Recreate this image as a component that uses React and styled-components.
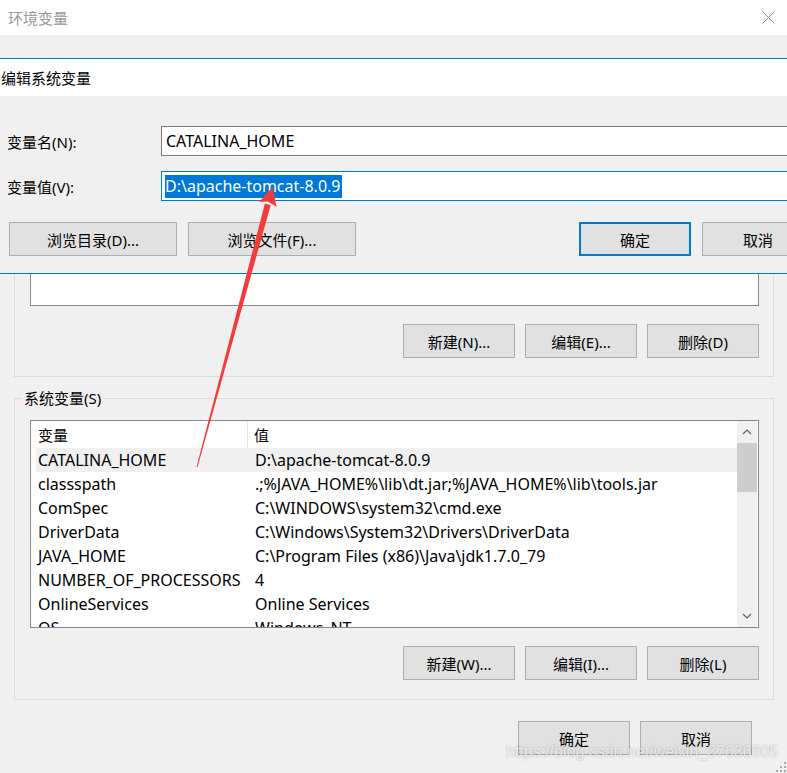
import React from 'react';
import styled, { createGlobalStyle } from 'styled-components';

const GlobalStyle = createGlobalStyle`
  html, body {
    margin: 0;
    padding: 0;
    overflow: hidden;
    background: #f0f0f0;
  }
  body {
    font-family: "Noto Sans", "Noto Sans CJK SC", sans-serif;
    font-size: 15px;
    color: #000;
  }
  * {
    box-sizing: border-box;
  }
`;

const systemVars = [
  ['CATALINA_HOME', 'D:\\apache-tomcat-8.0.9'],
  ['classspath', '.;%JAVA_HOME%\\lib\\dt.jar;%JAVA_HOME%\\lib\\tools.jar'],
  ['ComSpec', 'C:\\WINDOWS\\system32\\cmd.exe'],
  ['DriverData', 'C:\\Windows\\System32\\Drivers\\DriverData'],
  ['JAVA_HOME', 'C:\\Program Files (x86)\\Java\\jdk1.7.0_79'],
  ['NUMBER_OF_PROCESSORS', '4'],
  ['OnlineServices', 'Online Services'],
  ['OS', 'Windows_NT'],
];

const Window = styled.div`
  position: relative;
  width: 787px;
  height: 773px;
  overflow: hidden;
  background: #f0f0f0;
`;

const TitleBar = styled.div`
  height: 35px;
  background: #fff;
  display: flex;
  align-items: center;
  justify-content: space-between;
  padding: 0 12px 0 8px;
`;

const Title = styled.span`
  color: ${(p) => (p.$active ? '#000' : '#999')};
  font-size: 15px;
`;

const Content = styled.div`
  padding: 30px 13px 0 14px;
`;

const GroupBox = styled.div`
  position: relative;
  border: 1px solid #dcdcdc;
  margin-top: ${(p) => p.$top || 0}px;
  padding: 21px 14px ${(p) => p.$bottom || 18}px 15px;
`;

const Legend = styled.span`
  position: absolute;
  top: -12px;
  left: 7px;
  padding: 0 2px;
  background: #f0f0f0;
  line-height: 22px;
`;

const ListBox = styled.div`
  height: ${(p) => p.$h}px;
  border: 1px solid #828790;
  background: #fff;
  display: flex;
  font-size: 16px;
`;

const ListBody = styled.div`
  flex: 1;
  overflow: hidden;
  display: flex;
  flex-direction: column;
`;

const ListHeader = styled.div`
  height: 27px;
  flex: none;
  display: grid;
  grid-template-columns: 217px 1fr;
  align-items: center;
  font-size: 15px;
`;

const HeaderCell = styled.div`
  height: 100%;
  display: flex;
  align-items: center;
  padding-left: ${(p) => (p.$first ? 7 : 6)}px;
  border-right: ${(p) => (p.$first ? '1px solid #e5e5e5' : 'none')};
`;

const Rows = styled.div`
  padding-left: 5px;
`;

const Row = styled.div`
  height: 24px;
  display: grid;
  grid-template-columns: 212px 1fr;
  align-items: center;
  background: ${(p) => (p.$selected ? '#f0f0f0' : 'transparent')};
  white-space: nowrap;
`;

const Cell = styled.div`
  padding-left: ${(p) => (p.$first ? 2 : 7)}px;
  overflow: hidden;
`;

const ScrollBar = styled.div`
  width: 20px;
  margin-right: 1px;
  background: #f0f0f0;
  display: flex;
  flex-direction: column;
`;

const ScrollButton = styled.div`
  height: 22px;
  display: flex;
  align-items: center;
  justify-content: center;
  margin-top: ${(p) => (p.$down ? 'auto' : 0)};
`;

const ScrollThumb = styled.div`
  height: 49px;
  background: #cdcdcd;
`;

const ButtonRow = styled.div`
  display: flex;
  justify-content: ${(p) => p.$justify || 'flex-end'};
  gap: ${(p) => p.$gap || 10}px;
  margin-top: ${(p) => p.$top || 0}px;
  padding-left: ${(p) => p.$left || 0}px;
  padding-right: ${(p) => p.$right || 0}px;
`;

const Button = styled.button`
  width: ${(p) => p.$w || 112}px;
  height: 34px;
  flex: none;
  margin-left: ${(p) => (p.$push ? 'auto' : 0)};
  background: #e1e1e1;
  border: ${(p) => (p.$focused ? '2px solid #0078d7' : '1px solid #adadad')};
  font-family: inherit;
  font-size: 15px;
  color: #000;
  padding: 0;
`;

const EditDialog = styled.div`
  position: absolute;
  top: 58px;
  left: -7px;
  width: 830px;
  border: 1px solid #0078d7;
  background: #f0f0f0;
`;

const DialogTitle = styled.div`
  height: 37px;
  background: #fff;
  display: flex;
  align-items: center;
  padding-left: 7px;
`;

const DialogBody = styled.div`
  padding: 30px 8px 17px 13px;
`;

const FieldGrid = styled.div`
  display: grid;
  grid-template-columns: 154px 1fr;
  row-gap: 15px;
  align-items: center;
`;

const TextBox = styled.div`
  height: 30px;
  background: #fff;
  border: 1px solid ${(p) => (p.$focused ? '#0078d7' : '#7a7a7a')};
  display: flex;
  align-items: center;
  padding-left: ${(p) => (p.$focused ? 3 : 4)}px;
  white-space: nowrap;
  font-size: 16px;
`;

const Selection = styled.span`
  background: #0078d7;
  color: #fff;
  line-height: 23px;
  padding-right: 1px;
`;

const Overlay = styled.svg`
  position: absolute;
  left: 0;
  top: 0;
  pointer-events: none;
`;

const Watermark = styled.div`
  position: absolute;
  left: 506px;
  top: 743px;
  font-family: "Liberation Sans", Arial, sans-serif;
  font-size: 16px;
  color: rgba(255, 255, 255, 0.7);
  text-shadow: 0 0 2px rgba(0, 0, 0, 0.3);
  white-space: nowrap;
`;

const Grip = styled.svg`
  position: absolute;
  right: 0;
  bottom: 0;
`;

const Chevron = ({ down }) => (
  <svg width="10" height="6" viewBox="0 0 10 6">
    <path
      d={down ? 'M1 1 L5 5 L9 1' : 'M1 5 L5 1 L9 5'}
      fill="none"
      stroke="#606060"
      strokeWidth="1.2"
    />
  </svg>
);

const CloseIcon = () => (
  <svg width="13" height="13" viewBox="0 0 13 13">
    <path d="M0.5 0.5 L12.5 12.5 M12.5 0.5 L0.5 12.5" stroke="#8a8a8a" strokeWidth="1" />
  </svg>
);

export default function App() {
  return (
    <Window>
      <GlobalStyle />
      <TitleBar>
        <Title>环境变量</Title>
        <CloseIcon />
      </TitleBar>

      <Content>
        <GroupBox $bottom={18}>
          <ListBox $h={219} />
          <ButtonRow $top={18}>
            <Button>新建(N)...</Button>
            <Button>编辑(E)...</Button>
            <Button>删除(D)</Button>
          </ButtonRow>
        </GroupBox>

        <GroupBox $top={21} $bottom={19}>
          <Legend>系统变量(S)</Legend>
          <ListBox $h={208}>
            <ListBody>
              <ListHeader>
                <HeaderCell $first>变量</HeaderCell>
                <HeaderCell>值</HeaderCell>
              </ListHeader>
              <Rows>
                {systemVars.map(([name, value], i) => (
                  <Row key={name} $selected={i === 0}>
                    <Cell $first>{name}</Cell>
                    <Cell>{value}</Cell>
                  </Row>
                ))}
              </Rows>
            </ListBody>
            <ScrollBar>
              <ScrollButton>
                <Chevron />
              </ScrollButton>
              <ScrollThumb />
              <ScrollButton $down>
                <Chevron down />
              </ScrollButton>
            </ScrollBar>
          </ListBox>
          <ButtonRow $top={18}>
            <Button>新建(W)...</Button>
            <Button>编辑(I)...</Button>
            <Button>删除(L)</Button>
          </ButtonRow>
        </GroupBox>

        <ButtonRow $top={21} $right={22}>
          <Button>确定</Button>
          <Button>取消</Button>
        </ButtonRow>
      </Content>

      <EditDialog>
        <DialogTitle>
          <Title $active>编辑系统变量</Title>
        </DialogTitle>
        <DialogBody>
          <FieldGrid>
            <span>变量名(N):</span>
            <TextBox>CATALINA_HOME</TextBox>
            <span>变量值(V):</span>
            <TextBox $focused>
              <Selection>D:\apache-tomcat-8.0.9</Selection>
            </TextBox>
          </FieldGrid>
          <ButtonRow $top={21} $justify="flex-start" $gap={11} $left={2}>
            <Button $w={168}>浏览目录(D)...</Button>
            <Button $w={168}>浏览文件(F)...</Button>
            <Button $push $focused>确定</Button>
            <Button>取消</Button>
          </ButtonRow>
        </DialogBody>
      </EditDialog>

      <Overlay width="787" height="773" viewBox="0 0 787 773">
        <polygon
          points="270.7,205.2 264.9,203.6 196.5,466.9 197.5,467.1"
          fill="#f23c3c"
        />
        <polygon
          points="272.5,187 259.1,202.1 267.8,201.5 276.5,206.7"
          fill="#f23c3c"
        />
      </Overlay>

      <Watermark>https://blog.csdn.net/weixin_37636605</Watermark>

      <Grip width="12" height="12" viewBox="0 0 12 12">
        {[
          [9, 1], [9, 5], [5, 5], [9, 9], [5, 9], [1, 9],
        ].map(([x, y]) => (
          <rect key={`${x}-${y}`} x={x} y={y} width="2" height="2" fill="#a8a8a8" />
        ))}
      </Grip>
    </Window>
  );
}
